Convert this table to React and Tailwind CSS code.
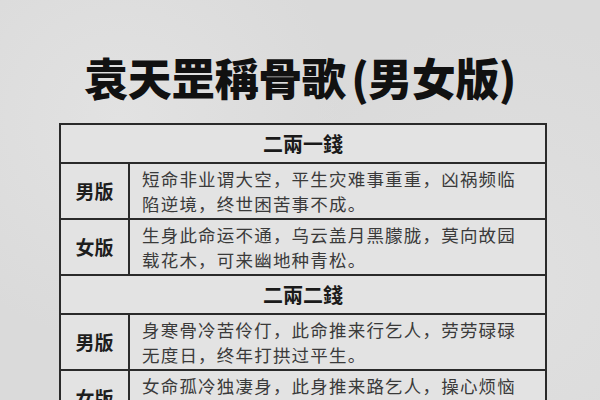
const sections = [
  {
    title: "二兩一錢",
    rows: [
      { label: "男版", lines: ["短命非业谓大空，平生灾难事重重，凶祸频临", "陷逆境，终世困苦事不成。"] },
      { label: "女版", lines: ["生身此命运不通，乌云盖月黑朦胧，莫向故园", "载花木，可来幽地种青松。"] },
    ],
  },
  {
    title: "二兩二錢",
    rows: [
      { label: "男版", lines: ["身寒骨冷苦伶仃，此命推来行乞人，劳劳碌碌", "无度日，终年打拱过平生。"] },
      { label: "女版", lines: ["女命孤冷独凄身，此身推来路乞人，操心烦恼", "难度日，一生痛苦度光阴。"] },
    ],
  },
];

export default function App() {
  return (
    <div
      className="w-[600px] h-[400px] overflow-hidden bg-[#dadada] bg-[radial-gradient(circle_at_20%_30%,#e2e2e2,transparent_40%),radial-gradient(circle_at_85%_70%,#e0e0e0,transparent_45%)]"
      style={{ fontFamily: '"Noto Sans CJK SC", "Noto Sans", sans-serif' }}
    >
      <h1 className="pt-[55px] text-center text-[44px] leading-[44px] font-black text-[#111] tracking-[-0.5px]">
        袁天罡稱骨歌<span className="ml-[6px]">(男女版)</span>
      </h1>
      <div className="mt-[24px] ml-[59px] w-[488px] border-2 border-[#2a2a2a] bg-[#e3e3e3]">
        {sections.map((s, si) => (
          <div key={s.title} className={si > 0 ? "border-t-2 border-[#2a2a2a]" : ""}>
            <div className="h-[37px] flex items-center justify-center text-[20px] font-bold text-[#1a1a1a]">
              {s.title}
            </div>
            {s.rows.map((r) => (
              <div key={r.label} className="flex border-t-2 border-[#2a2a2a] h-[56px]">
                <div className="w-[69px] shrink-0 border-r-2 border-[#2a2a2a] flex items-center justify-center text-[19px] font-bold text-[#1e1e1e]">
                  {r.label}
                </div>
                <div className="flex-1 pl-[12px] flex flex-col justify-center text-[17.5px] leading-[25px] tracking-[1.2px] text-[#3a3a3a]">
                  {r.lines.map((l) => (
                    <div key={l} className="whitespace-nowrap">{l}</div>
                  ))}
                </div>
              </div>
            ))}
          </div>
        ))}
      </div>
    </div>
  );
}
